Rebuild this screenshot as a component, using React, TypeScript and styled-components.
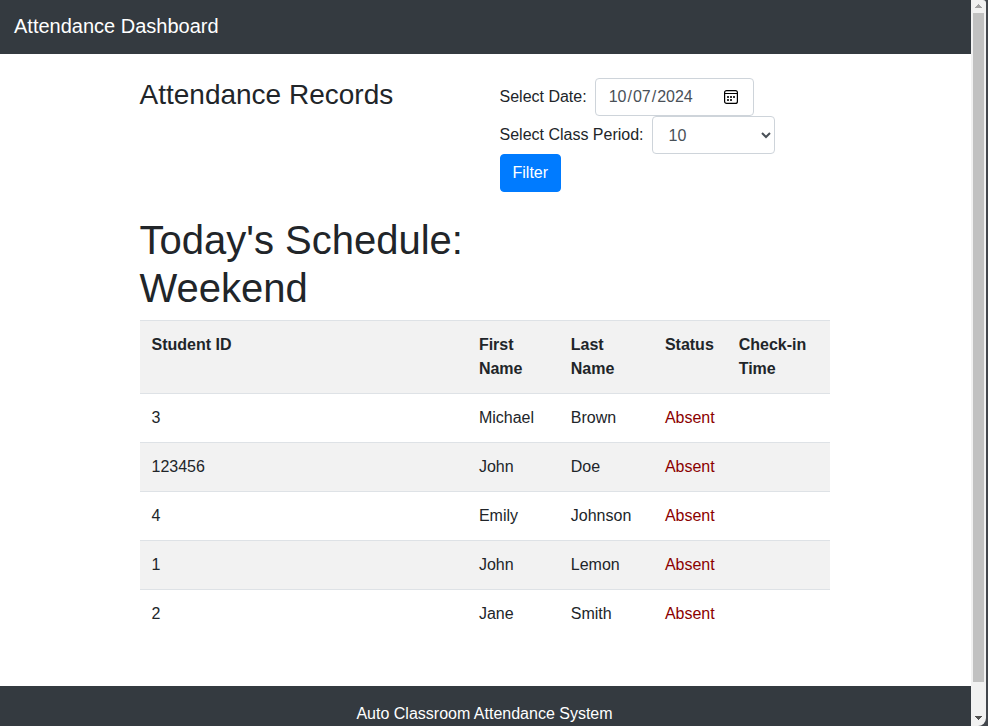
import React from "react";
import styled, { createGlobalStyle } from "styled-components";

const GlobalStyle = createGlobalStyle`
  *, *::before, *::after { box-sizing: border-box; }
  html { overflow: hidden; }
  body {
    margin: 0;
    background: #fff;
    color: #212529;
    font: 400 16px/1.5 "Liberation Sans", Arial, sans-serif;
  }
`;

const Window = styled.div`
  display: flex;
  height: 726px;
  overflow: hidden;
  background: #42464c;
`;

const Page = styled.div`
  width: 971px;
  flex: none;
  display: flex;
  flex-direction: column;
`;

const Navbar = styled.header`
  height: 54px;
  flex: none;
  padding: 11px 14px;
  background: #343a40;
  color: #fff;
  font-size: 20px;
  line-height: 30px;
`;

const Main = styled.main`
  flex: none;
  height: 632px;
  padding: 24px 140px 0 139.5px;
  background: #fff;
`;

const Row = styled.div`
  display: flex;
  margin-bottom: 24px;
`;

const Column = styled.div`
  width: 360px;
  flex: none;
`;

const Title = styled.h2`
  margin: 0;
  font-size: 28px;
  font-weight: 400;
  line-height: 1.2;
`;

const ScheduleTitle = styled.h1`
  width: 330px;
  margin: 0 0 8px;
  font-size: 40px;
  font-weight: 400;
  line-height: 1.2;
`;

const FilterForm = styled.form`
  display: flex;
  flex-direction: column;
  align-items: flex-start;
`;

const Field = styled.label`
  display: flex;
  align-items: center;
  gap: 8px;
  white-space: nowrap;
`;

const DateBox = styled.span`
  display: flex;
  position: relative;
`;

const CalendarIcon = styled.svg`
  position: absolute;
  top: 12px;
  right: 15.5px;
  pointer-events: none;
`;

const DateInput = styled.input`
  width: 159px;
  height: 38px;
  margin: 0;
  padding: 6px 12px;
  border: 1px solid #ced4da;
  border-radius: 4px;
  background: #fff;
  color: #495057;
  font: inherit;

  &::-webkit-calendar-picker-indicator {
    opacity: 0;
  }
`;

const PeriodSelect = styled.select`
  width: 123px;
  height: 38px;
  margin: 0;
  padding: 6px 12px;
  border: 1px solid #ced4da;
  border-radius: 4px;
  background: #fff;
  color: #495057;
  font: inherit;
`;

const FilterButton = styled.button`
  height: 38px;
  padding: 6px 12px;
  border: 1px solid #007bff;
  border-radius: 4px;
  background: #007bff;
  color: #fff;
  font: inherit;
`;

const Table = styled.table`
  width: 690px;
  table-layout: fixed;
  border-collapse: separate;
  border-spacing: 0;
`;

const TableRow = styled.tr<{ $shaded?: boolean }>`
  background: ${(p) => (p.$shaded ? "#f2f2f2" : "#fff")};
`;

const HeadCell = styled.th<{ $width: number }>`
  width: ${(p) => p.$width}px;
  padding: 12px;
  border-top: 1px solid #dee2e6;
  text-align: left;
  vertical-align: top;
`;

const Cell = styled.td<{ $absent?: boolean }>`
  height: 49px;
  padding: 12px;
  border-top: 1px solid #dee2e6;
  color: ${(p) => (p.$absent ? "#8b0000" : "inherit")};
  vertical-align: top;
`;

const Footer = styled.footer`
  flex: 1;
  padding-top: 16px;
  padding-right: 2px;
  background: #343a40;
  color: #fff;
  text-align: center;
`;

const Scrollbar = styled.aside`
  width: 15px;
  display: flex;
  flex-direction: column;
  align-items: center;
  background: #f1f1f1;
  border-radius: 0 3px 8px 0;
`;

const ArrowBox = styled.div<{ $top: number }>`
  height: 13px;
  padding-top: ${(p) => p.$top}px;
  display: flex;
  align-items: flex-start;
`;

const Thumb = styled.div`
  width: 11px;
  height: 669px;
  background: #c1c1c1;
`;

const Track = styled.div`
  flex: 1;
`;

const columns = [
  { label: "Student ID", width: 327.4 },
  { label: "First Name", width: 91.9 },
  { label: "Last Name", width: 94.1 },
  { label: "Status", width: 73.8 },
  { label: "Check-in Time", width: 102.8 },
];

const students = [
  { id: "3", first: "Michael", last: "Brown" },
  { id: "123456", first: "John", last: "Doe" },
  { id: "4", first: "Emily", last: "Johnson" },
  { id: "1", first: "John", last: "Lemon" },
  { id: "2", first: "Jane", last: "Smith" },
];

export default function App() {
  return (
    <>
      <GlobalStyle />
      <Window>
        <Page>
          <Navbar>Attendance Dashboard</Navbar>
          <Main>
            <Row>
              <Column>
                <Title>Attendance Records</Title>
              </Column>
              <FilterForm>
                <Field>
                  Select Date:
                  <DateBox>
                    <DateInput type="date" defaultValue="2024-10-07" />
                    <CalendarIcon width="14" height="14" viewBox="0 0 14 14">
                      <rect x="0.6" y="0.6" width="12.8" height="12.8" rx="2" fill="none" stroke="#000" strokeWidth="1.2" />
                      <path d="M1 3.5h12" stroke="#000" />
                      <path d="M3 6h2v2H3zM6 6h2v2H6zM9 6h2v2H9zM3 9h2v2H3zM6 9h2v2H6z" fill="#333" />
                    </CalendarIcon>
                  </DateBox>
                </Field>
                <Field>
                  Select Class Period:
                  <PeriodSelect defaultValue="10">
                    <option value="10">10</option>
                  </PeriodSelect>
                </Field>
                <FilterButton type="button">Filter</FilterButton>
              </FilterForm>
            </Row>
            <ScheduleTitle>Today's Schedule: Weekend</ScheduleTitle>
            <Table>
              <thead>
                <TableRow $shaded>
                  {columns.map((c) => (
                    <HeadCell key={c.label} $width={c.width}>
                      {c.label}
                    </HeadCell>
                  ))}
                </TableRow>
              </thead>
              <tbody>
                {students.map((s, i) => (
                  <TableRow key={s.id} $shaded={i % 2 === 1}>
                    <Cell>{s.id}</Cell>
                    <Cell>{s.first}</Cell>
                    <Cell>{s.last}</Cell>
                    <Cell $absent>Absent</Cell>
                    <Cell />
                  </TableRow>
                ))}
              </tbody>
            </Table>
          </Main>
          <Footer>Auto Classroom Attendance System</Footer>
        </Page>
        <Scrollbar>
          <ArrowBox $top={4}>
            <svg width="7" height="4" shapeRendering="crispEdges">
              <path d="M3 0h1v1h1v1h1v1h1v1H0V3h1V2h1V1h1z" fill="#a3a3a3" />
            </svg>
          </ArrowBox>
          <Thumb />
          <Track />
          <ArrowBox $top={3}>
            <svg width="7" height="4" shapeRendering="crispEdges">
              <path d="M0 0h7v1H6v1H5v1H4v1H3V3H2V2H1V1H0z" fill="#505050" />
            </svg>
          </ArrowBox>
        </Scrollbar>
      </Window>
    </>
  );
}
